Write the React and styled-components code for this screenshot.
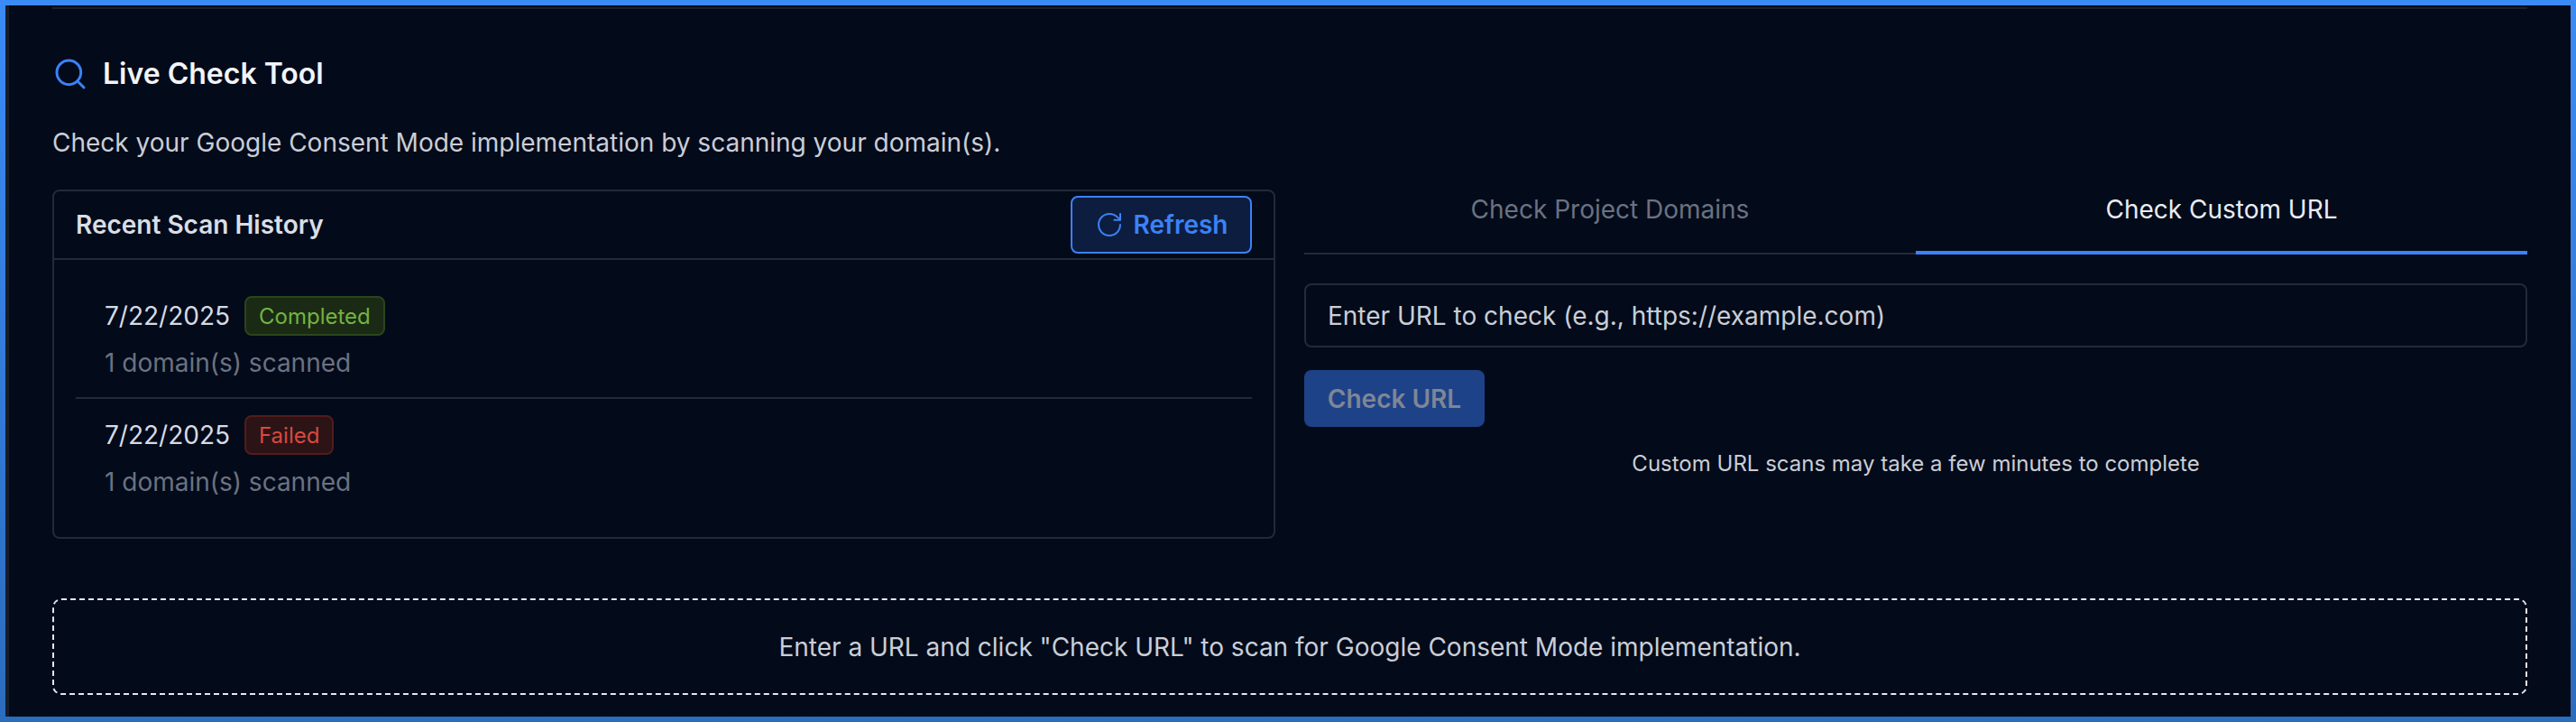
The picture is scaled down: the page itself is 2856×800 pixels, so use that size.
import styled, { createGlobalStyle } from "styled-components";
import { Search, RotateCw } from "lucide-react";

const GlobalStyle = createGlobalStyle`
  html, body {
    margin: 0;
    padding: 0;
    height: 800px;
    overflow: hidden;
    background: #030a1a;
  }
  * {
    box-sizing: border-box;
  }
`;

const Frame = styled.div`
  width: 2856px;
  height: 800px;
  padding: 6px;
  background: linear-gradient(180deg, #3b8bf6 0%, #2b6cbd 100%);
  font-family: Inter, "Liberation Sans", sans-serif;
`;

const Page = styled.main`
  height: 788px;
  background: #030a1a;
  border-left: 4px solid #161c2a;
  padding: 2px 48px 0 48px;
  overflow: hidden;
`;

const TopRule = styled.div`
  height: 2px;
  background: #1a202c;
`;

const Title = styled.h2`
  display: flex;
  align-items: center;
  gap: 16px;
  margin: 52px 0 0;
  height: 40px;
  color: #f1f4f8;
  font-size: 32px;
  font-weight: 600;
  line-height: 40px;

  svg {
    color: #3b82f6;
    flex: none;
  }
`;

const Description = styled.p`
  margin: 36px 0 0;
  color: #c9ced6;
  font-size: 28px;
  line-height: 40px;
`;

const Columns = styled.div`
  display: grid;
  grid-template-columns: 1fr 1fr;
  gap: 32px;
  margin-top: 32px;
`;

const Panel = styled.section`
  height: 387px;
  border: 2px solid #232a38;
  border-radius: 8px;
`;

const PanelHeader = styled.header`
  display: flex;
  align-items: center;
  justify-content: space-between;
  height: 76px;
  padding: 0 24px;
  border-bottom: 2px solid #232a38;
`;

const PanelTitle = styled.h3`
  margin: 0;
  color: #d9dee6;
  font-size: 28px;
  font-weight: 600;
  line-height: 40px;
`;

const RefreshButton = styled.button`
  display: flex;
  align-items: center;
  justify-content: center;
  gap: 11px;
  width: 201px;
  height: 64px;
  padding: 0;
  background: #0d1d3f;
  border: 2px solid #3b82f6;
  border-radius: 8px;
  color: #3b82f6;
  font-family: inherit;
  font-size: 28px;
  font-weight: 600;
`;

const ScanList = styled.ul`
  list-style: none;
  margin: 0;
  padding: 22px 24px 0;
`;

const ScanRow = styled.li`
  padding: 18px 32px;
  border-bottom: 2px solid #232a38;

  &:last-child {
    border-bottom: none;
  }
`;

const ScanHead = styled.div`
  display: flex;
  align-items: center;
  gap: 16px;
  height: 44px;
`;

const ScanDate = styled.span`
  color: #d5dbe4;
  font-size: 28px;
`;

const palette = {
  completed: { text: "#72b340", bg: "#1b2a15", line: "#2b451c" },
  failed: { text: "#d9493f", bg: "#2c1416", line: "#531c1d" },
};

const Badge = styled.span`
  display: inline-flex;
  align-items: center;
  height: 44px;
  padding: 0 14px;
  border: 2px solid ${(p) => palette[p.$status].line};
  border-radius: 8px;
  background: ${(p) => palette[p.$status].bg};
  color: ${(p) => palette[p.$status].text};
  font-size: 24px;
`;

const ScanMeta = styled.div`
  margin-top: 10px;
  color: #6b7280;
  font-size: 28px;
  line-height: 40px;
`;

const Tabs = styled.div`
  display: grid;
  grid-template-columns: 1fr 1fr;
  border-bottom: 2px solid #232a38;
`;

const Tab = styled.div`
  height: 72px;
  padding-top: 2px;
  margin-bottom: -2px;
  text-align: center;
  color: ${(p) => (p.$active ? "#e8ecf2" : "#6b7280")};
  border-bottom: 4px solid ${(p) => (p.$active ? "#3b82f6" : "transparent")};
  font-size: 28px;
  line-height: 40px;
`;

const UrlInput = styled.input`
  display: block;
  width: 100%;
  height: 71px;
  margin-top: 32px;
  padding: 0 24px;
  background: transparent;
  border: 2px solid #232a38;
  border-radius: 8px;
  color: #c9ced6;
  font-family: inherit;
  font-size: 28px;
  outline: none;

  &::placeholder {
    color: #c9ced6;
    opacity: 1;
  }
`;

const CheckButton = styled.button`
  display: block;
  width: 200px;
  height: 63px;
  margin-top: 25px;
  padding: 0;
  background: #1e4288;
  border: none;
  border-radius: 8px;
  color: #7f8695;
  font-family: inherit;
  font-size: 28px;
  font-weight: 600;
`;

const Note = styled.p`
  margin: 23px 0 0;
  text-align: center;
  color: #c9ced6;
  font-size: 24px;
  line-height: 36px;
`;

const Hint = styled.div`
  display: flex;
  align-items: center;
  justify-content: center;
  height: 107px;
  margin-top: 66px;
  border: 2px dashed #e2e8f0;
  border-radius: 10px;
  color: #c9ced6;
  font-size: 28px;
`;

const scans = [
  { date: "7/22/2025", status: "completed", label: "Completed" },
  { date: "7/22/2025", status: "failed", label: "Failed" },
];

export default function App() {
  return (
    <Frame>
      <GlobalStyle />
      <Page>
        <TopRule />
        <Title>
          <Search size={40} strokeWidth={1.8} />
          Live Check Tool
        </Title>
        <Description>
          Check your Google Consent Mode implementation by scanning your domain(s).
        </Description>
        <Columns>
          <Panel>
            <PanelHeader>
              <PanelTitle>Recent Scan History</PanelTitle>
              <RefreshButton>
                <RotateCw size={32} strokeWidth={1.5} />
                Refresh
              </RefreshButton>
            </PanelHeader>
            <ScanList>
              {scans.map((scan) => (
                <ScanRow key={scan.status}>
                  <ScanHead>
                    <ScanDate>{scan.date}</ScanDate>
                    <Badge $status={scan.status}>{scan.label}</Badge>
                  </ScanHead>
                  <ScanMeta>1 domain(s) scanned</ScanMeta>
                </ScanRow>
              ))}
            </ScanList>
          </Panel>
          <div>
            <Tabs>
              <Tab>Check Project Domains</Tab>
              <Tab $active>Check Custom URL</Tab>
            </Tabs>
            <UrlInput placeholder="Enter URL to check (e.g., https://example.com)" />
            <CheckButton>Check URL</CheckButton>
            <Note>Custom URL scans may take a few minutes to complete</Note>
          </div>
        </Columns>
        <Hint>Enter a URL and click "Check URL" to scan for Google Consent Mode implementation.</Hint>
      </Page>
    </Frame>
  );
}
